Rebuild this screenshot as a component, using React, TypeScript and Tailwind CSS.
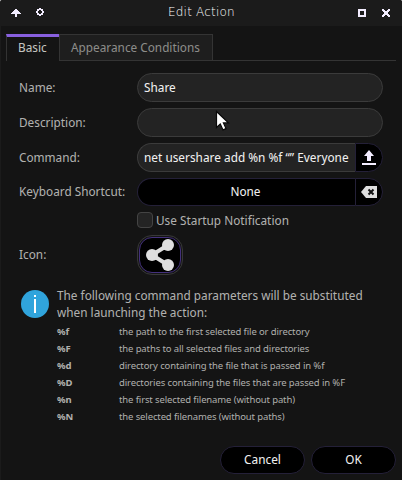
import React from 'react';

const label = 'w-[118px] shrink-0 leading-[18px] text-[#b0b0ae] whitespace-nowrap';
const field = 'flex h-[29px] w-[246px] items-center overflow-hidden rounded-full border border-[#3b3b3b] bg-[#232323] text-[#f0f0f0] whitespace-nowrap';

const params: [string, string][] = [
  ['%f', 'the path to the first selected file or directory'],
  ['%F', 'the paths to all selected files and directories'],
  ['%d', 'directory containing the file that is passed in %f'],
  ['%D', 'directories containing the files that are passed in %F'],
  ['%n', 'the first selected filename (without path)'],
  ['%N', 'the selected filenames (without paths)'],
];

function TitleBar() {
  return (
    <header className="flex h-[26px] items-start bg-[#1b1b1b]">
      <svg className="mt-[9px] ml-[10px] h-[8px] w-[10px]" viewBox="0 0 10 8" fill="#f3edff" shapeRendering="crispEdges">
        <path d="M4 0h2v1h1v1h1v1h1v1h1v1H9v0H6v3H4V5H0V4h1V3h1V2h1V1h1z" />
      </svg>
      <svg className="mt-[8px] ml-[15px] h-[8px] w-[8px]" viewBox="0 0 8 8" fill="#f3edff" fillRule="evenodd" shapeRendering="crispEdges">
        <path d="M3 0h2v1h2v2h1v2H7v2H5v1H3V7H1V5H0V3h1V1h2zM3 2v1H2v2h1v1h2V5h1V3H5V2z" />
      </svg>
      <h1 className="ml-[124px] mt-[4px] w-[70px] font-['DejaVu_Sans',sans-serif] text-[12px] leading-[16px] font-extralight tracking-[0.2px] text-white whitespace-nowrap">Edit Action</h1>
      <svg className="mt-[9px] ml-[120px] h-[8px] w-[8px]" viewBox="0 0 8 8" fill="#f3edff" fillRule="evenodd" shapeRendering="crispEdges">
        <path d="M0 0h8v8H0zM2 2v4h4V2z" />
      </svg>
      <svg className="mt-[9px] ml-[16px] h-[8px] w-[8px]" viewBox="0 0 8 8" fill="#f3edff" shapeRendering="crispEdges">
        <path d="M0 0h2v1h1v1h2V1h1V0h2v2H7v1H6v2h1v1h1v2H6V7H5V6H3v1H2v1H0V6h1V5h1V3H1V2H0z" />
      </svg>
    </header>
  );
}

function Tabs() {
  return (
    <nav className="ml-[5px] mt-[8px] flex h-[27px] w-[390px] leading-[18px] whitespace-nowrap">
      <div className="w-[53px] border-t-[3px] border-l border-t-[#8860df] border-l-[#333] pl-[11px] pt-[2px] text-[#c4c4c0]">Basic</div>
      <div className="w-[154px] border border-[#343434] bg-[#1e1e1e] pl-[11px] pt-[4px] text-[#8c8c89]">Appearance Conditions</div>
      <div className="flex-1 border-b border-[#343434]" />
    </nav>
  );
}

function Pointer() {
  return (
    <svg className="absolute left-[214px] top-[110px] h-[23px] w-[15px]" viewBox="0 0 15 23">
      <path d="M1.5 1.5v16l3.8-3.6 2.7 6 3-1.3-2.6-5.7h5z" fill="#fff" stroke="#0a0a0a" strokeWidth="1.2" />
    </svg>
  );
}

export default function App() {
  return (
    <div className="h-[480px] w-[402px] bg-white">
      <div className="relative h-[480px] w-[402px] overflow-hidden rounded-t-[2px] border-l border-[#1b1b1b] bg-[#141414] font-['Noto_Sans_Display','Noto_Sans',sans-serif] text-[12.5px]">
        <TitleBar />
        <Tabs />
        <main className="ml-[18px] mt-[12px]">
          <div className="flex h-[29px] items-center">
            <span className={label}>Name:</span>
            <div className={field + ' pt-px pl-[6px]'}>Share</div>
          </div>
          <div className="mt-[6px] flex h-[29px] items-center">
            <span className={label}>Description:</span>
            <div className={field} />
          </div>
          <div className="mt-[6px] flex h-[29px] items-center">
            <span className={label}>Command:</span>
            <div className="flex">
              <div className="flex h-[29px] w-[218px] items-center rounded-l-full border border-r-0 border-[#3b3b3b] bg-[#232323] pt-px pl-[6px] tracking-[0.02px] text-[#f0f0f0] whitespace-nowrap">net usershare add %n %f “” Everyone</div>
              <button className="h-[29px] w-[28px] rounded-r-full border border-[#242038] bg-black">
                <svg className="ml-[6px] h-[15px] w-[14px]" viewBox="0 0 14 15" fill="#f3edff"><path d="M7 0l5 6H9v5H5V6H2zM0 13h14v2H0z" /></svg>
              </button>
            </div>
          </div>
          <div className="mt-[6px] flex h-[28px] items-center">
            <span className={label}>Keyboard Shortcut:</span>
            <button className="flex h-[28px] w-[218px] items-center justify-center rounded-l-full border border-r-0 border-[#242038] bg-black pr-[2px] text-[#f0f0f0]">None</button>
            <button className="h-[28px] w-[28px] rounded-r-full border border-[#242038] bg-black">
              <svg className="ml-[5px] h-[12px] w-[16px]" viewBox="0 0 16 12"><path d="M5 0h11v12H5L0 6z" fill="#dedede" /><path d="M7.5 3.5l5 5m0-5l-5 5" stroke="#111" strokeWidth="2" /></svg>
            </button>
          </div>
          <div className="ml-[118px] mt-[6px] flex h-[16px] items-center">
            <span className="h-[16px] w-[16px] rounded-[4px] border border-[#444] bg-[#242424]" />
            <span className="ml-[3px] pt-[2px] leading-[16px] text-[#b0b0ae] whitespace-nowrap">Use Startup Notification</span>
          </div>
          <div className="mt-[7px] flex h-[40px] items-center">
            <span className={label}>Icon:</span>
            <button className="h-[40px] w-[46px] rounded-[15px] border border-[#383838] p-px">
              <span className="flex h-full w-full items-center justify-center rounded-[13px] border border-[#43307c] bg-black">
                <svg className="h-[32px] w-[28px]" viewBox="0 0 28 32"><path d="M22 6L6 16l16 10" fill="none" stroke="#dedede" strokeWidth="4" /><g fill="#dedede"><circle cx="22" cy="6" r="6" /><circle cx="6" cy="16" r="6" /><circle cx="22" cy="26" r="6" /></g></svg>
              </span>
            </button>
          </div>
          <section className="mt-[12px] flex h-[138px] text-[#b0b0ae]">
            <svg className="ml-[2px] mt-[3px] h-[28px] w-[28px] shrink-0" viewBox="0 0 28 28"><circle cx="14" cy="14" r="14" fill="#30a4dc" /><path d="M13 5h2v2h-2zM13 9h2v14h-2z" fill="#fff" /></svg>
            <div className="ml-[8px]">
              <p className="leading-[17px] whitespace-nowrap">The following command parameters will be substituted<br />when launching the action:</p>
              <dl className="mt-[2px] font-['Noto_Sans',sans-serif] text-[9.5px] leading-[17px] tracking-[-0.12px] whitespace-nowrap">
                {params.map(([key, text]) => (
                  <div key={key} className="flex h-[17px]"><dt className="w-[62px] font-bold">{key}</dt><dd>{text}</dd></div>
                ))}
              </dl>
            </div>
          </section>
        </main>
        <footer className="ml-[219px] mt-[21px] flex gap-[6px] text-[#f0f0f0]">
          <button className="h-[28px] w-[85px] rounded-full border border-[#242038] bg-black">Cancel</button>
          <button className="h-[28px] w-[85px] rounded-full border border-[#242038] bg-black">OK</button>
        </footer>
        <Pointer />
      </div>
    </div>
  );
}
